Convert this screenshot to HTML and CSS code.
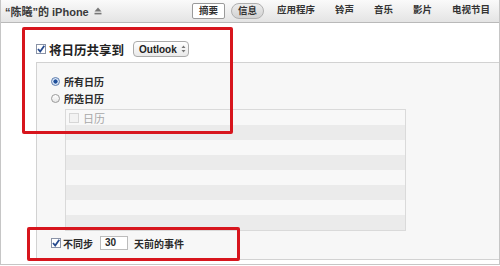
FILE: index.html
```html
<!DOCTYPE html>
<html lang="zh-CN">
  <head>
    <meta charset="UTF-8" />
    <meta name="viewport" content="width=device-width, initial-scale=1.0" />
    <title>信息</title>
    <link rel="stylesheet" href="styles.css">
  </head>
  <body>
    <div class="window">
      <div class="topbar">
        <div class="device">
          “陈曦”的 iPhone
          <svg class="eject" width="8" height="8" viewBox="0 0 8 8">
            <path d="M4 0.5 L7.5 4.5 L0.5 4.5 Z" fill="#777" />
            <rect x="0.5" y="5.8" width="7" height="1.6" fill="#777" />
          </svg>
        </div>
        <div class="tabs">
          <span class="tab summary">摘要</span>
          <span class="tab info">信息</span>
          <span class="tab">应用程序</span>
          <span class="tab">铃声</span>
          <span class="tab">音乐</span>
          <span class="tab">影片</span>
          <span class="tab">电视节目</span>
        </div>
      </div>

      <div class="content">
        <div class="share">
          <span class="check on"></span>
          <span class="share-label">将日历共享到</span>
          <span class="popup">Outlook
            <svg width="5" height="8" viewBox="0 0 5 8">
              <path d="M2.5 0.5 L4.5 3 L0.5 3 Z M2.5 7.5 L4.5 5 L0.5 5 Z" fill="#777" />
            </svg>
          </span>
        </div>

        <div class="group">
          <div class="radio-row"><span class="radio on"></span>所有日历</div>
          <div class="radio-row"><span class="radio"></span>所选日历</div>

          <div class="list">
            <div class="row first"><span class="check off"></span>日历</div>
            <div class="row"></div>
            <div class="row"></div>
            <div class="row"></div>
            <div class="row"></div>
            <div class="row"></div>
            <div class="row"></div>
            <div class="row"></div>
          </div>

          <div class="older">
            <span class="check on"></span>
            <span class="older-text">不同步</span>
            <span class="days">30</span>
            <span class="older-text">天前的事件</span>
          </div>
        </div>
      </div>

      <div class="mark mark-share"></div>
      <div class="mark mark-older"></div>
    </div>
  </body>
</html>
```

FILE: styles.css
```css
body {
  margin: 0;
  background: white;
  font-family: "Liberation Sans", "Noto Sans CJK SC", sans-serif;
  color: #2a2a2a;
}

.window {
  position: relative;
  box-sizing: border-box;
  width: 500px;
  height: 265px;
  border: 1px solid #c6c6c6;
  border-top: none;
  overflow: hidden;
}

.topbar {
  height: 22px;
  display: flex;
  align-items: center;
  background: linear-gradient(#fafafa, #e4e4e4);
  border-bottom: 1px solid #b9b9b9;
}

.device {
  display: flex;
  align-items: center;
  gap: 5px;
  padding-left: 4px;
  font-size: 11px;
  font-weight: bold;
  color: #3a3a3a;
}

.tabs {
  margin-left: auto;
  margin-right: 2px;
  display: flex;
  gap: 6px;
}

.tab {
  height: 14px;
  line-height: 14px;
  padding: 0 7px;
  font-size: 9.5px;
  font-weight: bold;
  color: #333;
}

.tab.summary {
  background: white;
  border: 1px solid #9a9a9a;
  border-radius: 2px;
  padding: 0 6px;
}

.tab.info {
  background: linear-gradient(#ececec, #d2d2d2);
  border: 1px solid #b0b0b0;
  border-radius: 8px;
  padding: 0 6px;
}

.content {
  padding-left: 35px;
}

.share {
  height: 16px;
  margin-top: 18px;
  display: flex;
  align-items: center;
}

.share-label {
  margin-left: 3px;
  font-size: 12.5px;
  font-weight: bold;
  color: #222;
}

.popup {
  box-sizing: border-box;
  margin-left: 9px;
  width: 56px;
  height: 16px;
  display: flex;
  align-items: center;
  gap: 4px;
  padding-left: 5px;
  border: 1px solid #ababab;
  border-radius: 4px;
  background: linear-gradient(#ffffff, #e9e9e9);
  font-size: 10px;
  font-weight: bold;
  color: #222;
}

.check {
  box-sizing: border-box;
  width: 10px;
  height: 10px;
  flex: none;
  border: 1px solid #8a93a6;
  background: white;
}

.check.on {
  background: white url("data:image/svg+xml,%3Csvg xmlns='http://www.w3.org/2000/svg' width='8' height='8' viewBox='0 0 8 8'%3E%3Cpath d='M1 4 L3.2 6.5 L7.3 0.8' fill='none' stroke='%23264a8e' stroke-width='1.8'/%3E%3C/svg%3E") center / 8px 8px no-repeat;
}

.check.off {
  border-color: #d6d6d6;
  background: #f2f2f2;
}

.group {
  margin-top: 5px;
  height: 198px;
  box-sizing: border-box;
  padding: 10px 0 0 14px;
  background: #f7f7f7;
  border-top: 1px solid #d2d2d2;
  border-left: 1px solid #d2d2d2;
  border-bottom: 1px solid #d2d2d2;
}

.radio-row {
  height: 17px;
  display: flex;
  align-items: center;
  gap: 4px;
  font-size: 10px;
  font-weight: bold;
  color: #2a2a2a;
}

.radio {
  box-sizing: border-box;
  width: 9px;
  height: 9px;
  border-radius: 50%;
  border: 1px solid #9a9a9a;
  background: linear-gradient(#ffffff, #e6e6e6);
}

.radio.on {
  border-color: #5d7cad;
  background: radial-gradient(circle, #1f4f9a 0 1.8px, #d9e6f7 2.4px);
}

.list {
  margin: 2px 0 0 14px;
  width: 341px;
  box-sizing: border-box;
  border: 1px solid #dadada;
}

.row {
  height: 15px;
  background: #f8f8f8;
}

.row:nth-child(even) {
  background: #ebebeb;
}

.row.first {
  display: flex;
  align-items: center;
  gap: 4px;
  padding-left: 3px;
  font-size: 11px;
  color: #a8a8a8;
}

.older {
  margin-top: 5px;
  height: 14px;
  display: flex;
  align-items: center;
}

.older-text {
  margin-left: 2px;
  font-size: 10px;
  font-weight: bold;
  color: #2a2a2a;
}

.days {
  box-sizing: border-box;
  margin: 0 4px 0 7px;
  width: 28px;
  height: 14px;
  line-height: 12px;
  padding-left: 4px;
  border: 1px solid #bcbcbc;
  background: white;
  font-size: 10px;
  font-weight: bold;
}

.mark {
  position: absolute;
  box-sizing: border-box;
  border: 3px solid #d7151d;
  border-radius: 2px;
}

.mark-share {
  left: 21px;
  top: 27px;
  width: 211px;
  height: 107px;
}

.mark-older {
  left: 26px;
  top: 227px;
  width: 213px;
  height: 34px;
}
```
